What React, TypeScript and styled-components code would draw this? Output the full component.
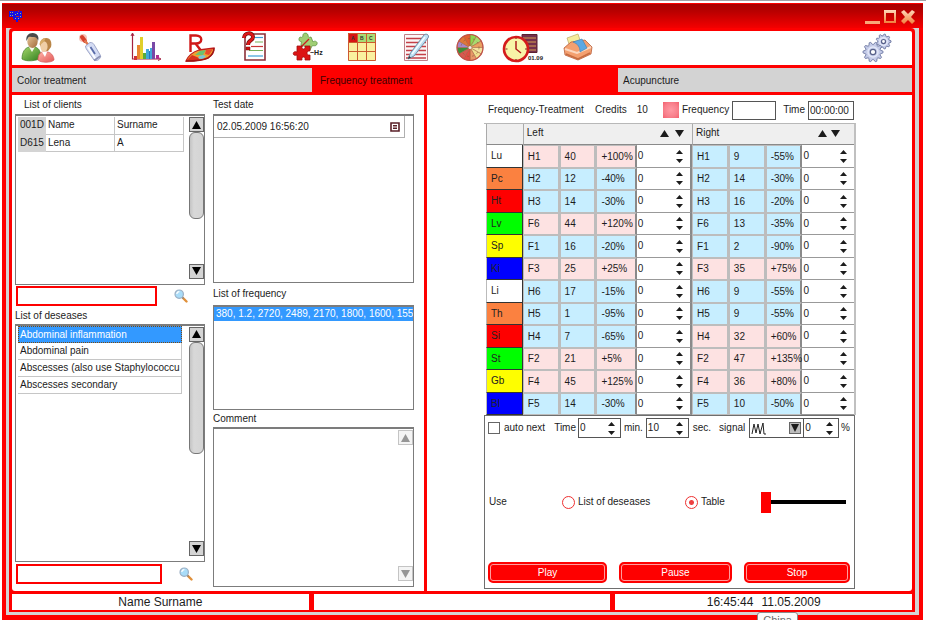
import React, { useState } from "react";
import styled, { createGlobalStyle, css } from "styled-components";

const RED = "#fe0000";
const LINE = "#6e6e6e";
const SELECT = "#3399ff";

const GlobalStyle = createGlobalStyle`
  *, *::before, *::after { box-sizing: border-box; }
  body { margin: 0; background: #fff; }
  body, button, input, select, textarea {
    font-family: "Liberation Sans", Arial, sans-serif;
    font-size: 10px;
    line-height: 12px;
    color: #1c1c1c;
  }
  button { padding: 0; border: 0; background: none; cursor: pointer; }
  input, textarea { padding: 0; margin: 0; border: 0; border-radius: 0; background: #fff; outline: none; }
  svg { display: block; }
`;

/* ---------- window frame ---------- */

const Page = styled.div`
  display: flex;
  flex-direction: column;
  min-height: 100vh;
  padding: 2px 3px 2px 2px;
  border-top: 1px solid #a3a3a8;
`;

const AppWindow = styled.div`
  position: relative;
  flex: 1;
  display: flex;
  flex-direction: column;
  overflow: hidden;
`;

const TitleBar = styled.header`
  display: flex;
  align-items: center;
  justify-content: space-between;
  height: 25px;
  padding: 0 7px;
  border-top: 1px solid ${RED};
  background: linear-gradient(#a80000, #b80000 30%, #f40000);
`;

const WindowButtons = styled.div`
  display: flex;
  gap: 3px;
`;

const Frame = styled.div`
  flex: 1;
  display: flex;
  border: solid ${RED};
  border-width: 0 4px 5px 4px;
  padding: 0 4px 3px 3px;
  background: #d4d4d4;
`;

const Body = styled.div`
  flex: 1;
  min-width: 0;
  display: flex;
  flex-direction: column;
  gap: 3px;
  padding: 3px 3px 2px 3px;
  border-radius: 4px 4px 0 0;
  background: ${RED};
`;

const Toolbar = styled.nav`
  display: flex;
  height: 34px;
  padding-right: 8px;
  border-radius: 2px 2px 0 0;
  background: #fff;
`;

const ToolButton = styled.button<{ $last?: boolean }>`
  display: flex;
  justify-content: center;
  width: 54px;
  ${(p) => p.$last && css`margin-left: auto;`}
`;

const Tabs = styled.div`
  display: grid;
  grid-template-columns: 300fr 306fr 294fr;
  height: 24px;
`;

const Tab = styled.button<{ $active?: boolean }>`
  padding: 1px 0 0 ${(p) => (p.$active ? 8 : 5)}px;
  text-align: left;
  color: ${(p) => (p.$active ? "#3c0000" : "#1c1c1c")};
  background: ${(p) => (p.$active ? RED : "#d3d3d3")};
`;

const Content = styled.main`
  flex: 1;
  display: grid;
  grid-template-columns: minmax(0, 412fr) minmax(0, 485fr);
  gap: 3px;
`;

const Panel = styled.section<{ $side: "left" | "right" }>`
  background: #fff;
  ${(p) =>
    p.$side === "left"
      ? css`
          display: grid;
          grid-template-columns: minmax(0, 190fr) minmax(0, 201fr);
          gap: 8px;
          padding: 0 10px 0 3px;
          border-radius: 0 0 0 3px;
        `
      : css`
          display: flex;
          flex-direction: column;
          padding: 0 56px 2px 57px;
          border-radius: 0 0 3px 0;
        `}
`;

const Footer = styled.footer`
  display: grid;
  grid-template-columns: repeat(3, 1fr);
  gap: 5px;
  height: 16px;
`;

const FooterCell = styled.div`
  display: flex;
  align-items: center;
  justify-content: center;
  gap: 8px;
  font-size: 12px;
  background: #fff;
`;

const Hint = styled.div`
  position: absolute;
  left: 82%;
  top: 100%;
  height: 16px;
  margin-top: -8px;
  padding: 1px 5px;
  border: 1px solid #8a8a8a;
  border-radius: 3px;
  font-size: 11px;
  color: #6a6a6a;
  background: #fafafa;
`;

/* ---------- lists ---------- */

const Column = styled.div<{ $bottom?: number }>`
  display: flex;
  flex-direction: column;
  min-width: 0;
  padding-bottom: ${(p) => p.$bottom ?? 0}px;
`;

const Caption = styled.label<{ $height: number; $indent?: boolean }>`
  height: ${(p) => p.$height}px;
  line-height: ${(p) => p.$height}px;
  padding-left: ${(p) => (p.$indent ? 9 : 0)}px;
`;

const Box = styled.div<{ $grow: number }>`
  flex: ${(p) => p.$grow} 1 0;
  min-height: 0;
  display: flex;
  justify-content: space-between;
  overflow: hidden;
  border: 1px solid #7c7c7c;
  border-top-width: 2px;
  background: #fff;
`;

const ClientTable = styled.table`
  width: 166px;
  height: 35px;
  margin: 1px 0 0 2px;
  border-collapse: collapse;
  table-layout: fixed;
  align-self: flex-start;
  td, th {
    height: 17px;
    padding: 0 2px;
    border: 1px solid #c6c6c6;
    font-weight: normal;
    text-align: left;
  }
  tr:first-child > * { border-top: 0; }
  th { width: 27px; padding: 0 1px; background: #d4d4d4; border-color: #d4d4d4; }
`;

const DiseaseList = styled.ul`
  width: 164px;
  min-width: 0;
  margin: 0 0 0 2px;
  padding: 0;
  list-style: none;
`;

const DiseaseItem = styled.li<{ $selected?: boolean }>`
  height: 17px;
  overflow: hidden;
  white-space: nowrap;
  line-height: 16px;
  border: solid #c6c6c6;
  border-width: 0 1px 1px 0;
  padding-left: 2px;
  ${(p) =>
    p.$selected &&
    css`
      padding-left: 1px;
      line-height: 15px;
      color: #fff;
      background: ${SELECT};
      border: 1px dotted #7a4a10;
    `}
`;

const DateItem = styled.div`
  flex: 1;
  display: flex;
  align-items: center;
  justify-content: space-between;
  height: 22px;
  margin-right: 8px;
  padding: 0 4px 0 3px;
  border: solid #b0b0b0;
  border-width: 0 1px 1px 0;
`;

const FrequencyItem = styled.div`
  flex: 1;
  height: 14px;
  padding-left: 2px;
  overflow: hidden;
  white-space: nowrap;
  line-height: 14px;
  color: #fff;
  background: ${SELECT};
`;

const CommentText = styled.textarea`
  flex: 1;
  min-width: 0;
  resize: none;
`;

const ScrollTrack = styled.div`
  display: flex;
  flex-direction: column;
  width: 15px;
  flex-shrink: 0;
  padding: 1px 0 5px;
`;

const ScrollButton = styled.button<{ $dim?: boolean }>`
  display: flex;
  align-items: center;
  justify-content: center;
  height: 15px;
  flex-shrink: 0;
  border: 1px solid ${(p) => (p.$dim ? "#c4c4c4" : "#666")};
  background: ${(p) => (p.$dim ? "#f4f4f4" : "#d4d4d4")};
  color: ${(p) => (p.$dim ? "#969696" : "#000")};
  &:last-child { margin-top: auto; }
`;

const ScrollThumb = styled.div<{ $share: number }>`
  height: ${(p) => p.$share}%;
  border: 1px solid #777;
  border-radius: 6px;
  background: linear-gradient(90deg, #c4c4c4, #d8d8d8 30%, #d4d4d4);
`;

const SearchRow = styled.div<{ $end?: boolean }>`
  display: flex;
  align-items: center;
  gap: 17px;
  height: 20px;
  margin: ${(p) => (p.$end ? "2px 0 7px 1px" : "1px 0 1px 1px")};
`;

const SearchInput = styled.input<{ $wide?: boolean }>`
  width: ${(p) => (p.$wide ? 146 : 141)}px;
  height: 20px;
  padding: 0 4px;
  border: 2px solid ${RED};
`;

/* ---------- frequency treatment ---------- */

const StatusRow = styled.div`
  display: flex;
  align-items: center;
  height: 28px;
  padding: 2px 2px 0 4px;
  white-space: nowrap;
`;

const Title = styled.span`
  flex: 0 0 107px;
`;

const Credits = styled.span`
  flex: 1;
  display: flex;
  gap: 10px;
`;

const Lamp = styled.span`
  width: 16px;
  height: 16px;
  margin-right: 3px;
  background: radial-gradient(#ff9aa4, #f8808c 60%, #f4606e);
`;

const StatusInput = styled.input<{ $gap?: boolean }>`
  width: ${(p) => (p.$gap ? 44 : 46)}px;
  height: 19px;
  margin: 0 ${(p) => (p.$gap ? 7 : 0)}px 0 3px;
  padding: 0 1px;
  border: 1px solid #555;
`;

const Grid = styled.table`
  width: 100%;
  padding-left: 2px;
  border-collapse: separate;
  border-spacing: 0;
  table-layout: fixed;
  border-right: 2px solid #c0c0c0;
  border-top: 1px solid #b8b8b8;
`;

const Col = styled.col<{ $w: number }>`
  width: ${(p) => p.$w}%;
`;

const HeadCell = styled.th`
  height: 21px;
  padding: 0 8px 2px 3px;
  font-weight: normal;
  text-align: left;
  background: #efefef;
  border-left: 1px solid #aaa;
  border-bottom: 1px solid #8a8a8a;
`;

const HeadInner = styled.div<{ $tight?: boolean }>`
  display: flex;
  align-items: center;
  gap: ${(p) => (p.$tight ? 4 : 6)}px;
  padding-right: ${(p) => (p.$tight ? 6 : 0)}px;
  span { flex: 1; }
`;

const Row = styled.tr`
  height: 22px;
  &:nth-child(odd) { height: 23px; }
`;

const Organ = styled.th<{ $color: string }>`
  padding: 0 4px;
  text-align: left;
  font-weight: normal;
  color: #222;
  background: ${(p) => p.$color};
  border: solid #333;
  border-width: 0 1px 1px 1px;
  border-left-color: #bbb;
`;

const Value = styled.td<{ $high: boolean; $edge?: boolean }>`
  padding: 0 0 0 4px;
  white-space: nowrap;
  background: ${(p) => (p.$high ? "#fde2e2" : "#c7eeff")};
  border: 1px solid #bdbdbd;
  border-right: 2px solid ${(p) => (p.$edge ? "#8a8a8a" : "#bdbdbd")};
`;

const SpinCell = styled.td<{ $edge?: boolean }>`
  padding: 0;
  border-bottom: 1px solid #999;
  border-right: ${(p) => (p.$edge ? "2px solid #8a8a8a" : "0")};
`;

const SpinBox = styled.span<{ $framed?: boolean; $w?: number }>`
  display: flex;
  align-items: center;
  justify-content: space-between;
  width: ${(p) => (p.$w ? `${p.$w}px` : "100%")};
  height: ${(p) => (p.$framed ? 20 : 21)}px;
  padding: 0 5px 0 1px;
  ${(p) => p.$framed && css`border: 1px solid #555;`}
  input { flex: 1; width: 10px; min-width: 0; background: none; }
`;

const SpinButtons = styled.span<{ $inset?: boolean }>`
  display: flex;
  flex-direction: column;
  gap: 5px;
  padding-right: ${(p) => (p.$inset ? 2 : 0)}px;
`;

const Controls = styled.div`
  flex: 1;
  display: flex;
  flex-direction: column;
  justify-content: space-between;
  margin-right: 1px;
  padding: 2px 4px 5px 3px;
  border: 1px solid ${LINE};
`;

const OptionsRow = styled.div`
  display: flex;
  align-items: center;
  height: 20px;
  white-space: nowrap;
`;

const OptionLabel = styled.label<{ $l?: number; $r?: number }>`
  padding: 0 ${(p) => p.$r ?? 0}px 0 ${(p) => p.$l ?? 0}px;
`;

const Check = styled.input`
  appearance: none;
  flex-shrink: 0;
  width: 12px;
  height: 12px;
  border: 1px solid #666;
  &:checked { background: #666; }
`;

const SignalBox = styled.span`
  display: grid;
  align-items: center;
  width: 54px;
  height: 20px;
  border: 1px solid #555;
  border-right: 0;
  > * { grid-area: 1 / 1; }
`;

const SignalSelect = styled.select`
  appearance: none;
  width: 100%;
  height: 18px;
  padding: 0;
  border: 0;
  background: none;
`;

const SignalArt = styled.span`
  display: flex;
  align-items: center;
  justify-content: space-between;
  padding: 0 2px 0 1px;
  pointer-events: none;
`;

const DropMark = styled.span`
  display: flex;
  align-items: center;
  justify-content: center;
  width: 12px;
  height: 12px;
  border: 1px solid #666;
  background: #bdbdbd;
`;

const UseRow = styled.div`
  display: grid;
  grid-template-columns: 73fr 123fr 76fr 89px;
  align-items: center;
  height: 22px;
  margin-top: 4px;
  padding-left: 1px;
`;

const RadioLabel = styled.label`
  display: flex;
  align-items: center;
  gap: 3px;
`;

const Radio = styled.input`
  appearance: none;
  width: 13px;
  height: 13px;
  border: 1px solid #ee3030;
  border-radius: 50%;
  &:checked { background: radial-gradient(circle, #ee4040 2px, #fff 3px); }
`;

const Slider = styled.input`
  appearance: none;
  width: 85px;
  height: 21px;
  background: none;
  &::-webkit-slider-runnable-track { height: 4px; background: #000; }
  &::-webkit-slider-thumb {
    appearance: none;
    width: 10px;
    height: 21px;
    margin-top: -8px;
    background: ${RED};
  }
`;

const ButtonRow = styled.div`
  display: grid;
  grid-template-columns: 119fr 113fr 106fr;
  gap: 12px;
`;

const ActionButton = styled.button`
  height: 21px;
  border: 2px solid ${RED};
  border-radius: 5px;
  color: #fff;
  background: ${RED};
  box-shadow: inset 0 0 0 1px #ff9c9c;
`;

/* ---------- drawings ---------- */

const Triangle = ({ dir, w = 9, h = 8 }: { dir: "up" | "down"; w?: number; h?: number }) => (
  <svg width={w} height={h} viewBox="0 0 10 10" preserveAspectRatio="none" aria-hidden="true">
    <path d={dir === "up" ? "M5 0 10 10H0Z" : "M0 0H10L5 10Z"} fill="currentColor" />
  </svg>
);

const Magnifier = () => (
  <svg width="14" height="14" viewBox="0 0 14 14" aria-hidden="true">
    <path d="m8.5 8.5 4 4" stroke="#e0903a" strokeWidth="2.4" strokeLinecap="round" />
    <path d="m8 8 1.500 1.500" stroke="#888" strokeWidth="1.600" />
    <circle cx="5.200" cy="5.200" r="4.200" fill="#a9dcf8" stroke="#9cb0c4" strokeWidth="1.200" />
    <path d="M2.800 5a2.600 2.600 0 0 1 2.600-2.400" stroke="#fff" strokeWidth="1.200" fill="none" />
  </svg>
);

const Art = ({ children }: { children: React.ReactNode }) => (
  <svg width="48" height="34" viewBox="-2 0 48 34" fill="none" aria-hidden="true">
    {children}
  </svg>
);

const UsersArt = () => (
  <Art>
    <defs>
      <linearGradient id="green" x2="1" y2="1"><stop stopColor="#a6d86c" /><stop offset="1" stopColor="#2f7d1e" /></linearGradient>
      <linearGradient id="rose" x2="1" y2="1"><stop stopColor="#ffb4a8" /><stop offset="1" stopColor="#e25858" /></linearGradient>
      <linearGradient id="skin" x2="1" y2="1"><stop stopColor="#e9c79a" /><stop offset="1" stopColor="#a06a3c" /></linearGradient>
    </defs>
    <path d="M5 28c0-7 3-11 7-12h6c4 1 6 5 6 11-4 3-15 4-19 1Z" fill="url(#green)" stroke="#3d7a26" strokeWidth=".7" />
    <path d="m12 16 3 5 3-5Z" fill="#f4f9ee" />
    <ellipse cx="15.500" cy="10.500" rx="5.200" ry="6.500" fill="url(#skin)" />
    <path d="M9.500 10c-1-5 2-8 6-8 5 0 7 4 5.500 8-1-3-2-4-4-4-3 0-5-1-6 1Z" fill="#4a4a4a" />
    <path d="M21 29c0-5 2-8 5-8h5c4 1 6 5 6 8-3 3-13 3-16 0Z" fill="url(#rose)" stroke="#d45a5a" strokeWidth=".7" />
    <path d="m25 21 3 5 2-5Z" fill="#fff" />
    <path d="M23 14c0-4 2-7 6-7 5 0 6 5 5 9l-3 4h-5Z" fill="#b98648" />
    <ellipse cx="27" cy="15.500" rx="3.600" ry="5.200" fill="#f0cfa6" />
    <path d="M22.500 14c0-4 3-7 6-7-1 4-3 5-6 7Z" fill="#d7ac68" />
  </Art>
);

const PenArt = () => (
  <Art>
    <circle cx="12" cy="7" r="4" fill="#f4a898" opacity=".7" />
    <path d="m11 6 3 4" stroke="#d8402c" strokeWidth="4" strokeLinecap="round" />
    <path d="m13.500 9.500 3.500 4" stroke="#e07850" strokeWidth="2.500" />
    <path d="m14.500 15 4.500-3.500c2 0 3 .5 4 2l6.500 11c1 3-4 6.500-6.500 4.500l-7-10c-1-1.500-1.500-2.500-1.500-4Z" fill="#d4dcf4" stroke="#98a0c4" strokeWidth=".9" />
    <path d="m17 16 7.500 12" stroke="#fafcff" strokeWidth="2" />
    <path d="m19.500 16 4.500 7" stroke="#5a6ca8" strokeWidth="1.800" />
    <path d="m23 29.500 6.500-4.500" stroke="#8890b4" strokeWidth="1.600" />
  </Art>
);

const ChartArt = () => (
  <Art>
    <path d="M7.500 3v25H34" stroke="#a52040" strokeWidth="1.200" />
    <path d="m6 5 1.500-3L9 5M33 26.500l3 1.500-3 1.500" stroke="#a52040" />
    <path fill="#d0323a" d="M9 25h3v4h-3z" />
    <path fill="#e9862e" d="M12 14h3v14h-3z" />
    <path fill="#e0cf2a" d="M15 6h3v22h-3z" />
    <path fill="#58ac3c" d="M18 22h3v6h-3z" />
    <path fill="#42a8d8" d="M21 18h3v10h-3zM25 17h2v11h-2z" />
    <path fill="#2776bd" d="M24 20h1v8h-1z" />
    <path fill="#7849a6" d="M27 11h3v17h-3z" />
    <path fill="#b02f92" d="M31 24h3v4h-3z" />
  </Art>
);

const ReportArt = () => (
  <Art>
    <path d="M11.500 21V4.500H17c7 0 7 8 0 8h-5.500m5 0 7 9" stroke="#d01818" strokeWidth="2.400" />
    <path d="M7 30c2-5 7-9 13-11l15-2c0 4-3 8-6 10-6 3-14 3-22 3Z" fill="#f0a030" stroke="#c21c1c" strokeWidth="1.300" />
    <path d="m16 24 5-4 6-1-3 5Z" fill="#6cc070" />
    <path d="m27 19 7-1-4 6-4-1Z" fill="#e84a2c" />
    <path d="m20 25 4-1 3 1-3 3-5-.5Z" fill="#78c8da" />
    <path d="m7 30 6-6 6 2.500 2 2.500Z" fill="#d83020" />
    <path d="M7 30c8 0 16 0 22-3 3-2 6-6 6-10" stroke="#a01616" strokeWidth="1.500" />
  </Art>
);

const QuestionArt = () => (
  <Art>
    <path d="M12 3h20v26H12Z" fill="#fff" stroke="#8c3038" strokeWidth="1.600" />
    <path d="M22 6.500h8" stroke="#3da0d8" strokeWidth="1.200" />
    <path d="M22 11h8M16 19.500h14" stroke="#78b05a" strokeWidth="1.200" />
    <path d="M18 15.500h12" stroke="#c83838" strokeWidth="1.200" />
    <path d="M15 25h15" stroke="#3da0d8" strokeWidth="1.200" />
    <path d="M11 7c0-6 9-6 9-1 0 4-5 3-5 8" stroke="#701010" strokeWidth="4" />
    <path d="M11 7c0-6 9-6 9-1 0 4-5 3-5 8" stroke="#e01818" strokeWidth="2.500" />
    <path d="M13 16h4v3h-4z" fill="#d01010" stroke="#701010" strokeWidth=".5" />
  </Art>
);

const PuzzleArt = () => (
  <Art>
    <path d="M13 6c2 1 3 0 3-2s4-3 5 0c0 2 1 3 3 2l2 5c2-2 5 0 4 2-1 3-4 1-5 2l-2 4-4-2c-1-1-1-3-3-2-3 1-2-3-1-4-3 0-4-3-2-5Z" fill="#a0cf74" stroke="#5f9440" strokeWidth=".8" />
    <path d="m14 16 8-8" stroke="#c82020" strokeWidth="1.200" />
    <path d="M10 15h5c-1 4 4 4 3 0h5v5c-4-1-4 5 0 4v5h-5c1-4-4-4-3 0h-5v-5c-5 2-5-5 0-3Z" fill="#dc1414" stroke="#9e0c0c" strokeWidth=".8" />
    <text x="23" y="24" fontSize="7" fontWeight="bold" fill="#222">~Hz</text>
  </Art>
);

const TableArt = () => (
  <Art>
    <path fill="#faf0a0" d="M7 2h28v28H7z" />
    <path fill="#a8dc74" d="M16 2h19v9H16z" />
    <path fill="#d81414" d="M7 2h9v9H7z" />
    <path d="M7.500 2.500h27v27h-27ZM16.500 2v28M25.500 2v28M7 11.500h28M7 20.500h28" stroke="#cc5a30" />
    <g fontSize="5" fontWeight="bold" fill="#333">
      <text x="10" y="9">A</text><text x="19" y="9">B</text><text x="28" y="9">C</text>
    </g>
  </Art>
);

const NoteArt = () => (
  <Art>
    <path d="M9.500 3.500h23v26h-23Z" fill="#fbf6f6" stroke="#c08088" />
    <path d="M11 7.500h20M11 11.500h20M11 15.500h20M11 19.500h20M11 23.500h20M11 27h20" stroke="#c44048" strokeWidth="1.300" />
    <path d="m13 28 2.500-6L29 4c2-2 6 0 4 3L19 25Z" fill="#bfe0f4" stroke="#6f8fa8" />
    <path d="m17 23 13-17" stroke="#f4fcff" strokeWidth="1.500" />
    <path d="m13 28 1-3 2 1.500Z" fill="#333" />
  </Art>
);

const WheelArt = () => {
  const colors = ["#8cd850", "#a8dc70", "#e8a060", "#f4e4a0", "#f0e090", "#e89868", "#e04c44", "#d85850", "#389038", "#a888c8", "#e07838", "#e06030"];
  return (
    <Art>
      {colors.map((c, i) => {
        const a = (i * Math.PI) / 6 - Math.PI / 2;
        const b = a + Math.PI / 6;
        const p = (t: number) => `${21 + 13 * Math.cos(t)} ${16.5 + 13 * Math.sin(t)}`;
        return <path key={c} d={`M21 16.5 ${p(a)}A13 13 0 0 1 ${p(b)}Z`} fill={c} stroke="#a05a38" strokeWidth=".5" />;
      })}
      <circle cx="21" cy="16.500" r="13" stroke="#c05048" strokeWidth="1.200" />
      <circle cx="21" cy="16.500" r="9" stroke="#8a5a38" strokeWidth=".6" strokeDasharray="2 3" />
      <circle cx="21" cy="16.500" r="1.500" fill="#eee" />
    </Art>
  );
};

const ClockArt = () => (
  <Art>
    <path d="M19 3.500h15v18H19Z" fill="#74304c" stroke="#5a2030" />
    <path d="M20 7h13M20 11h13M20 15h13M20 19h13" stroke="#d8a050" />
    <circle cx="13" cy="18" r="12" fill="#f8f4a8" stroke="#d41c1c" strokeWidth="2.600" />
    <path d="M13 10v8l5 4" stroke="#b01c1c" strokeWidth="1.500" />
    <path d="M13 7v1M13 28v1M2.500 18h2M22 18h2" stroke="#803020" strokeWidth="1.200" />
    <text x="25" y="29" fontSize="6" fontWeight="bold" fill="#222">01.09</text>
  </Art>
);

const PrinterArt = () => (
  <Art>
    <path d="m10 7 11-4 3 9-11 4Z" fill="#f6ec9c" stroke="#c4b070" strokeWidth=".8" />
    <path d="m7 17 7-6 14-2 7 7-1 7-13 6-13-5Z" fill="#f4a070" stroke="#b8603c" strokeWidth=".8" />
    <path d="m8 18 12 4 14-6" stroke="#fcd8c0" strokeWidth="2" />
    <path d="m16 11 9-3 5 9-7 4c0-5-2-8-7-10Z" fill="#5ca8e4" stroke="#3c80b4" strokeWidth=".6" />
    <path d="m9 23 12 5 12-6" stroke="#c86c40" strokeWidth="1.500" />
  </Art>
);

const Gear = ({ x, y, r, teeth }: { x: number; y: number; r: number; teeth: number }) => {
  const points = Array.from({ length: teeth * 4 }, (_, i) => {
    const a = ((i - 0.5) * Math.PI) / (teeth * 2);
    const d = i % 4 < 2 ? r : r * 0.76;
    return `${(x + d * Math.cos(a)).toFixed(1)},${(y + d * Math.sin(a)).toFixed(1)}`;
  }).join(" ");
  return (
    <g strokeLinejoin="round">
      <polygon points={points} fill="#c4cbe8" stroke="#7680a8" />
      <circle cx={x} cy={y} r={r * 0.5} stroke="#e4e8f8" strokeWidth="1.400" />
      <circle cx={x} cy={y} r={r * 0.27} fill="#fff" stroke="#59628a" strokeWidth="1.200" />
    </g>
  );
};

const GearsArt = () => (
  <Art>
    <Gear x={28.5} y={10.5} r={7.5} teeth={9} />
    <Gear x={18} y={21} r={10} teeth={10} />
  </Art>
);

const LogoArt = () => (
  <svg width="14" height="12" viewBox="0 0 14 12" aria-hidden="true">
    <path d="M0 1h5l1 1V1h3l1-1 1 1h2v7h-2v2H9v2H7v-2H5V9H4V7H0Z" fill="#1410e4" />
    <path d="M1 2h1v1H1zM3 2h1v1H3zM1 5h1v1H1zM3 5h1v1H3zM6 4h1v1H6zM8 3h1v1H8zM11 3h1v1h-1zM11 6h1v1h-1zM6 8h1v1H6zM9 8h1v1H9z" fill="#a8b070" />
    <path d="M7 6h3v1H7zM9 1h1v1H9z" fill="#d02020" />
  </svg>
);

const orangeGradient = (
  <defs>
    <linearGradient id="wb" x1="0" y1="0" x2="0" y2="1">
      <stop stopColor="#ffd8bc" /><stop offset="1" stopColor="#f0803c" />
    </linearGradient>
  </defs>
);

/* ---------- data ---------- */

const tools = [
  { name: "Clients", art: UsersArt },
  { name: "Pen", art: PenArt },
  { name: "Chart", art: ChartArt },
  { name: "Report", art: ReportArt },
  { name: "Questionnaire", art: QuestionArt },
  { name: "Frequencies", art: PuzzleArt },
  { name: "Table", art: TableArt },
  { name: "Notes", art: NoteArt },
  { name: "Wheel", art: WheelArt },
  { name: "Schedule", art: ClockArt },
  { name: "Print", art: PrinterArt },
];

const diseases = ["Abdominal inflammation", "Abdominal pain", "Abscesses (also use Staphylococcu", "Abscesses secondary"];

type Point = [string, string, string];
const rows: { organ: string; color: string; left: Point; right: Point }[] = [
  { organ: "Lu", color: "#ffffff", left: ["H1", "40", "+100%"], right: ["H1", "9", "-55%"] },
  { organ: "Pc", color: "#fb8140", left: ["H2", "12", "-40%"], right: ["H2", "14", "-30%"] },
  { organ: "Ht", color: "#fe0000", left: ["H3", "14", "-30%"], right: ["H3", "16", "-20%"] },
  { organ: "Lv", color: "#00fe00", left: ["F6", "44", "+120%"], right: ["F6", "13", "-35%"] },
  { organ: "Sp", color: "#fefe00", left: ["F1", "16", "-20%"], right: ["F1", "2", "-90%"] },
  { organ: "Ki", color: "#0000fe", left: ["F3", "25", "+25%"], right: ["F3", "35", "+75%"] },
  { organ: "Li", color: "#ffffff", left: ["H6", "17", "-15%"], right: ["H6", "9", "-55%"] },
  { organ: "Th", color: "#fb8140", left: ["H5", "1", "-95%"], right: ["H5", "9", "-55%"] },
  { organ: "Si", color: "#fe0000", left: ["H4", "7", "-65%"], right: ["H4", "32", "+60%"] },
  { organ: "St", color: "#00fe00", left: ["F2", "21", "+5%"], right: ["F2", "47", "+135%"] },
  { organ: "Gb", color: "#fefe00", left: ["F4", "45", "+125%"], right: ["F4", "36", "+80%"] },
  { organ: "Bl", color: "#0000fe", left: ["F5", "14", "-30%"], right: ["F5", "10", "-50%"] },
];

const columnShares = [10, 10, 10, 11, 15, 10, 10, 10, 14];

/* ---------- parts ---------- */

function Spinner({ label, id, start = 0, framed, width }: { label?: string; id?: string; start?: number; framed?: boolean; width?: number }) {
  const [value, setValue] = useState(start);
  return (
    <SpinBox $framed={framed} $w={width}>
      <input id={id} aria-label={label} value={value} onChange={(e) => setValue(Number(e.target.value) || 0)} />
      <SpinButtons $inset={!framed}>
        <button type="button" aria-label="Increase" onClick={() => setValue(value + 1)}><Triangle dir="up" w={7} h={4} /></button>
        <button type="button" aria-label="Decrease" onClick={() => setValue(value - 1)}><Triangle dir="down" w={7} h={4} /></button>
      </SpinButtons>
    </SpinBox>
  );
}

function Scrollbar({ thumb, dim }: { thumb?: number; dim?: boolean }) {
  return (
    <ScrollTrack>
      <ScrollButton type="button" $dim={dim} aria-label="Scroll up"><Triangle dir="up" /></ScrollButton>
      {thumb !== undefined && <ScrollThumb $share={thumb} />}
      <ScrollButton type="button" $dim={dim} aria-label="Scroll down"><Triangle dir="down" /></ScrollButton>
    </ScrollTrack>
  );
}

function PointCells({ point }: { point: Point }) {
  const high = point[2].startsWith("+");
  return (
    <>
      <Value $high={high}>{point[0]}</Value>
      <Value $high={high}>{point[1]}</Value>
      <Value $high={high} $edge>{point[2]}</Value>
    </>
  );
}

function SideHead({ title, tight }: { title: string; tight?: boolean }) {
  return (
    <HeadCell colSpan={4} scope="colgroup">
      <HeadInner $tight={tight}>
        <span>{title}</span>
        <button type="button" aria-label={`${title} up`}><Triangle dir="up" h={7} /></button>
        <button type="button" aria-label={`${title} down`}><Triangle dir="down" h={7} /></button>
      </HeadInner>
    </HeadCell>
  );
}

export default function App() {
  const [use, setUse] = useState("table");
  const [selected, setSelected] = useState(0);

  return (
    <Page>
      <GlobalStyle />
      <AppWindow>
        <TitleBar>
          <LogoArt />
          <WindowButtons>
            <button type="button" aria-label="Minimize">
              <svg width="15" height="15" viewBox="0 0 15 15">{orangeGradient}<path d="M0 12h15v3H0z" fill="#f8a878" /></svg>
            </button>
            <button type="button" aria-label="Maximize">
              <svg width="14" height="15" viewBox="0 0 14 15"><path d="M1 1h12v13H1zM3 4v8h8V4z" fillRule="evenodd" fill="url(#wb)" /></svg>
            </button>
            <button type="button" aria-label="Close">
              <svg width="16" height="15" viewBox="0 0 16 15"><path d="m1 3 3-2 4 4 4-4 3 2-4 5 4 4-3 3-4-4-4 4-3-3 4-4Z" fill="url(#wb)" /></svg>
            </button>
          </WindowButtons>
        </TitleBar>
        <Frame>
          <Body>
            <Toolbar>
              {tools.map(({ name, art: Icon }) => (
                <ToolButton key={name} type="button" aria-label={name}><Icon /></ToolButton>
              ))}
              <ToolButton type="button" aria-label="Settings" $last><GearsArt /></ToolButton>
            </Toolbar>
            <Tabs role="tablist">
              <Tab role="tab" type="button">Color treatment</Tab>
              <Tab role="tab" type="button" aria-selected $active>Frequency treatment</Tab>
              <Tab role="tab" type="button">Acupuncture</Tab>
            </Tabs>
            <Content>
              <Panel $side="left">
                <Column>
                  <Caption as="div" $height={19} $indent>List of clients</Caption>
                  <Box $grow={170}>
                    <ClientTable>
                      <tbody>
                        <tr><th scope="row">001D</th><td>Name</td><td>Surname</td></tr>
                        <tr><th scope="row">D615</th><td>Lena</td><td>A</td></tr>
                      </tbody>
                    </ClientTable>
                    <Scrollbar thumb={54} />
                  </Box>
                  <SearchRow>
                    <SearchInput aria-label="Search clients" />
                    <button type="button" aria-label="Find client"><Magnifier /></button>
                  </SearchRow>
                  <Caption as="div" $height={17}>List of deseases</Caption>
                  <Box $grow={239}>
                    <DiseaseList>
                      {diseases.map((d, i) => (
                        <DiseaseItem key={d} $selected={i === selected} onClick={() => setSelected(i)}>{d}</DiseaseItem>
                      ))}
                    </DiseaseList>
                    <Scrollbar thumb={49} />
                  </Box>
                  <SearchRow $end>
                    <SearchInput aria-label="Search deseases" $wide />
                    <button type="button" aria-label="Find desease"><Magnifier /></button>
                  </SearchRow>
                </Column>
                <Column $bottom={4}>
                  <Caption as="div" $height={19}>Test date</Caption>
                  <Box $grow={170}>
                    <DateItem>
                      02.05.2009 16:56:20
                      <svg width="10" height="10" viewBox="0 0 10 10" aria-hidden="true">
                        <path d="M1 1h8v8H1z" fill="#fff" stroke="#5a2028" strokeWidth="1.600" />
                        <path d="M3 3.500h4M3 5h4M3 6.500h4" stroke="#5a2028" />
                      </svg>
                    </DateItem>
                  </Box>
                  <Caption as="div" $height={22}>List of frequency</Caption>
                  <Box $grow={104}>
                    <FrequencyItem>380, 1.2, 2720, 2489, 2170, 1800, 1600, 1550</FrequencyItem>
                  </Box>
                  <Caption htmlFor="comment" $height={17}>Comment</Caption>
                  <Box $grow={160}>
                    <CommentText id="comment" />
                    <Scrollbar dim />
                  </Box>
                </Column>
              </Panel>
              <Panel $side="right">
                <StatusRow>
                  <Title>Frequency-Treatment</Title>
                  <Credits><span>Credits</span><span>10</span></Credits>
                  <Lamp />
                  <label htmlFor="frequency">Frequency</label>
                  <StatusInput id="frequency" $gap />
                  <label htmlFor="elapsed">Time</label>
                  <StatusInput id="elapsed" defaultValue="00:00:00" />
                </StatusRow>
                <Grid>
                  <colgroup>
                    {columnShares.map((w, i) => <Col key={i} $w={w} />)}
                  </colgroup>
                  <thead>
                    <tr>
                      <HeadCell as="td" />
                      <SideHead title="Left" />
                      <SideHead title="Right" tight />
                    </tr>
                  </thead>
                  <tbody>
                    {rows.map((r) => (
                      <Row key={r.organ}>
                        <Organ scope="row" $color={r.color}>{r.organ}</Organ>
                        <PointCells point={r.left} />
                        <SpinCell $edge><Spinner label={`${r.organ} left`} /></SpinCell>
                        <PointCells point={r.right} />
                        <SpinCell><Spinner label={`${r.organ} right`} /></SpinCell>
                      </Row>
                    ))}
                  </tbody>
                </Grid>
                <Controls>
                  <OptionsRow>
                    <Check type="checkbox" id="auto" />
                    <OptionLabel htmlFor="auto" $l={4} $r={9}>auto next</OptionLabel>
                    <OptionLabel htmlFor="min" $r={2}>Time</OptionLabel>
                    <Spinner id="min" framed width={43} />
                    <OptionLabel htmlFor="min" $l={3} $r={3}>min.</OptionLabel>
                    <Spinner id="sec" start={10} framed width={43} />
                    <OptionLabel htmlFor="sec" $l={4} $r={8}>sec.</OptionLabel>
                    <OptionLabel htmlFor="signal" $r={4}>signal</OptionLabel>
                    <SignalBox>
                      <SignalSelect id="signal"><option value="wave" aria-label="Wave" /></SignalSelect>
                      <SignalArt>
                        <svg width="15" height="13" viewBox="0 0 15 13" aria-hidden="true">
                          <path d="M1 12 3 2l2 9 2-9 2 10 3-11 1 11h2" fill="none" stroke="#222" />
                        </svg>
                        <DropMark><Triangle dir="down" w={8} h={8} /></DropMark>
                      </SignalArt>
                    </SignalBox>
                    <Spinner id="percent" framed width={36} />
                    <OptionLabel htmlFor="percent" $l={2}>%</OptionLabel>
                  </OptionsRow>
                  <UseRow role="radiogroup">
                    <span>Use</span>
                    <RadioLabel>
                      <Radio type="radio" name="use" checked={use === "list"} onChange={() => setUse("list")} />
                      List of deseases
                    </RadioLabel>
                    <RadioLabel>
                      <Radio type="radio" name="use" checked={use === "table"} onChange={() => setUse("table")} />
                      Table
                    </RadioLabel>
                    <Slider type="range" aria-label="Intensity" defaultValue={0} />
                  </UseRow>
                  <ButtonRow>
                    <ActionButton type="button">Play</ActionButton>
                    <ActionButton type="button">Pause</ActionButton>
                    <ActionButton type="button">Stop</ActionButton>
                  </ButtonRow>
                </Controls>
              </Panel>
            </Content>
            <Footer>
              <FooterCell>Name Surname</FooterCell>
              <FooterCell />
              <FooterCell><span>16:45:44</span><span>11.05.2009</span></FooterCell>
            </Footer>
          </Body>
        </Frame>
        <Hint>China</Hint>
      </AppWindow>
    </Page>
  );
}
